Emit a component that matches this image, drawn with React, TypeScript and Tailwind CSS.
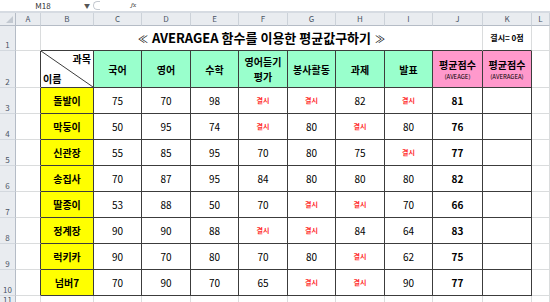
import React from "react";

const font = { fontFamily: '"Noto Sans CJK KR", "Noto Sans", sans-serif' };

const cols = ["A", "B", "C", "D", "E", "F", "G", "H", "I", "J", "K", "L"];
const subjects = ["국어", "영어", "수학", "영어듣기\n평가", "봉사활동", "과제", "발표"];

const ABS = "결시";
const rows: { name: string; scores: (number | string)[]; avg: number }[] = [
  { name: "돌발이", scores: [75, 70, 98, ABS, ABS, 82, ABS], avg: 81 },
  { name: "막둥이", scores: [50, 95, 74, ABS, 80, ABS, 80], avg: 76 },
  { name: "신관장", scores: [55, 85, 95, 70, 80, 75, ABS], avg: 77 },
  { name: "송집사", scores: [70, 87, 95, 84, 80, 80, 80], avg: 82 },
  { name: "딸종이", scores: [53, 88, 50, 70, ABS, ABS, 70], avg: 66 },
  { name: "정계장", scores: [90, 90, 88, ABS, ABS, 84, 64], avg: 83 },
  { name: "럭키카", scores: [90, 70, 80, 70, 80, ABS, 62], avg: 75 },
  { name: "넘버7", scores: [70, 90, 70, 65, ABS, ABS, 90], avg: 77 },
];

const grid = "border-r border-b border-[#dadcdd]";
const dark = "border-r border-b border-[#3c3c3c]";
const rowHead =
  "flex items-end justify-center pb-[1px] bg-[#e9ecf0] border-r border-b border-r-[#b5bcc6] border-b-[#d3d8de] text-[8px] leading-none text-[#4a5465]";

function RowHead({ n }: { n: number }) {
  return <div className={rowHead}>{n}</div>;
}

export default function App() {
  return (
    <div className="w-[550px] h-[302px] overflow-hidden bg-white flex flex-col" style={font}>
      {/* formula bar */}
      <div className="h-[13px] shrink-0 flex items-center border-b-2 border-[#d6dbe2] text-[8px] leading-none">
        <div className="w-[84px] flex justify-center pl-[2px] text-[#333]">M18</div>
        <span className="text-[6px] text-[#555]">▼</span>
        <div className="ml-[3px] w-[7px] h-[9px] rounded-l-full border-l border-y border-[#c4c9d0]" />
        <span className="ml-[31px] italic text-[7px] text-[#444] font-serif">fx</span>
      </div>

      <div className="flex-1 grid grid-cols-[16px_25px_53px_48px_49px_48px_49px_48px_49px_48px_50px_49px_1fr] grid-rows-[13px_25px_37px_repeat(8,26px)_1fr]">
        {/* column headers */}
        <div className="relative bg-[#e9ecf0] border-r border-b border-[#b5bcc6]">
          <svg className="absolute right-[2px] bottom-[2px]" width="7" height="7" viewBox="0 0 7 7">
            <polygon points="7,0 7,7 0,7" fill="#c3c9d1" />
          </svg>
        </div>
        {cols.map((c) => (
          <div
            key={c}
            className="flex items-center justify-center bg-[#e9ecf0] border-r border-b border-r-[#ccd2d9] border-b-[#b5bcc6] text-[8px] leading-none text-[#4a5465]"
          >
            {c}
          </div>
        ))}

        {/* row 1 */}
        <RowHead n={1} />
        <div className={grid} />
        <div className="col-span-9 flex items-center justify-center gap-[4px] border-b border-b-[#3c3c3c] border-r border-r-[#dadcdd] text-[13px] font-bold text-black">
          <span className="text-[10px] font-normal">≪</span>
          <span>AVERAGEA 함수를 이용한 평균값구하기</span>
          <span className="text-[10px] font-normal">≫</span>
        </div>
        <div className="flex items-center justify-center border-b border-b-[#3c3c3c] border-r border-r-[#dadcdd] text-[8px] font-bold text-black">
          결시= 0점
        </div>
        <div className={grid} />

        {/* row 2: header */}
        <RowHead n={2} />
        <div className="border-r border-b border-r-[#3c3c3c] border-b-[#dadcdd]" />
        <div className={`relative flex flex-col justify-between px-[2px] py-[2px] text-[10px] leading-[12px] font-bold ${dark}`}>
          <svg className="absolute inset-0 w-full h-full" viewBox="0 0 100 100" preserveAspectRatio="none">
            <line x1="0" y1="0" x2="100" y2="100" stroke="#3c3c3c" strokeWidth="1" vectorEffect="non-scaling-stroke" />
          </svg>
          <span className="self-end">과목</span>
          <span className="self-start">이름</span>
        </div>
        {subjects.map((s) => (
          <div
            key={s}
            className={`flex items-center justify-center text-center whitespace-pre-line bg-[#99ffcc] text-[10px] leading-[15px] font-bold ${dark}`}
          >
            {s}
          </div>
        ))}
        {["(AVEAGE)", "(AVERAGEA)"].map((s) => (
          <div key={s} className={`flex flex-col items-center justify-center bg-[#ff99cc] ${dark}`}>
            <span className="text-[10px] leading-[14px] font-bold">평균점수</span>
            <span className="text-[6px] leading-[9px]">{s}</span>
          </div>
        ))}
        <div className={grid} />

        {/* data rows */}
        {rows.map((r, i) => (
          <React.Fragment key={r.name}>
            <RowHead n={i + 3} />
            <div className="border-r border-b border-r-[#3c3c3c] border-b-[#dadcdd]" />
            <div className={`flex items-center justify-center bg-[#ffff00] text-[10px] font-bold ${dark}`}>
              {r.name}
            </div>
            {r.scores.map((v, j) => (
              <div key={j} className={`flex items-center justify-center ${dark}`}>
                {v === ABS ? (
                  <span className="text-[7px] font-bold text-[#ff2a2a]">{ABS}</span>
                ) : (
                  <span className="text-[10px] text-black">{v}</span>
                )}
              </div>
            ))}
            <div className={`flex items-center justify-center text-[10px] font-bold ${dark}`}>{r.avg}</div>
            <div className={dark} />
            <div className={grid} />
          </React.Fragment>
        ))}

        {/* row 11 */}
        <div className="flex items-start justify-center overflow-hidden bg-[#e9ecf0] border-r border-[#b5bcc6] text-[8px] leading-none text-[#4a5465]">
          11
        </div>
        {cols.map((c) => (
          <div key={c} className="border-r border-[#dadcdd]" />
        ))}
      </div>
    </div>
  );
}
